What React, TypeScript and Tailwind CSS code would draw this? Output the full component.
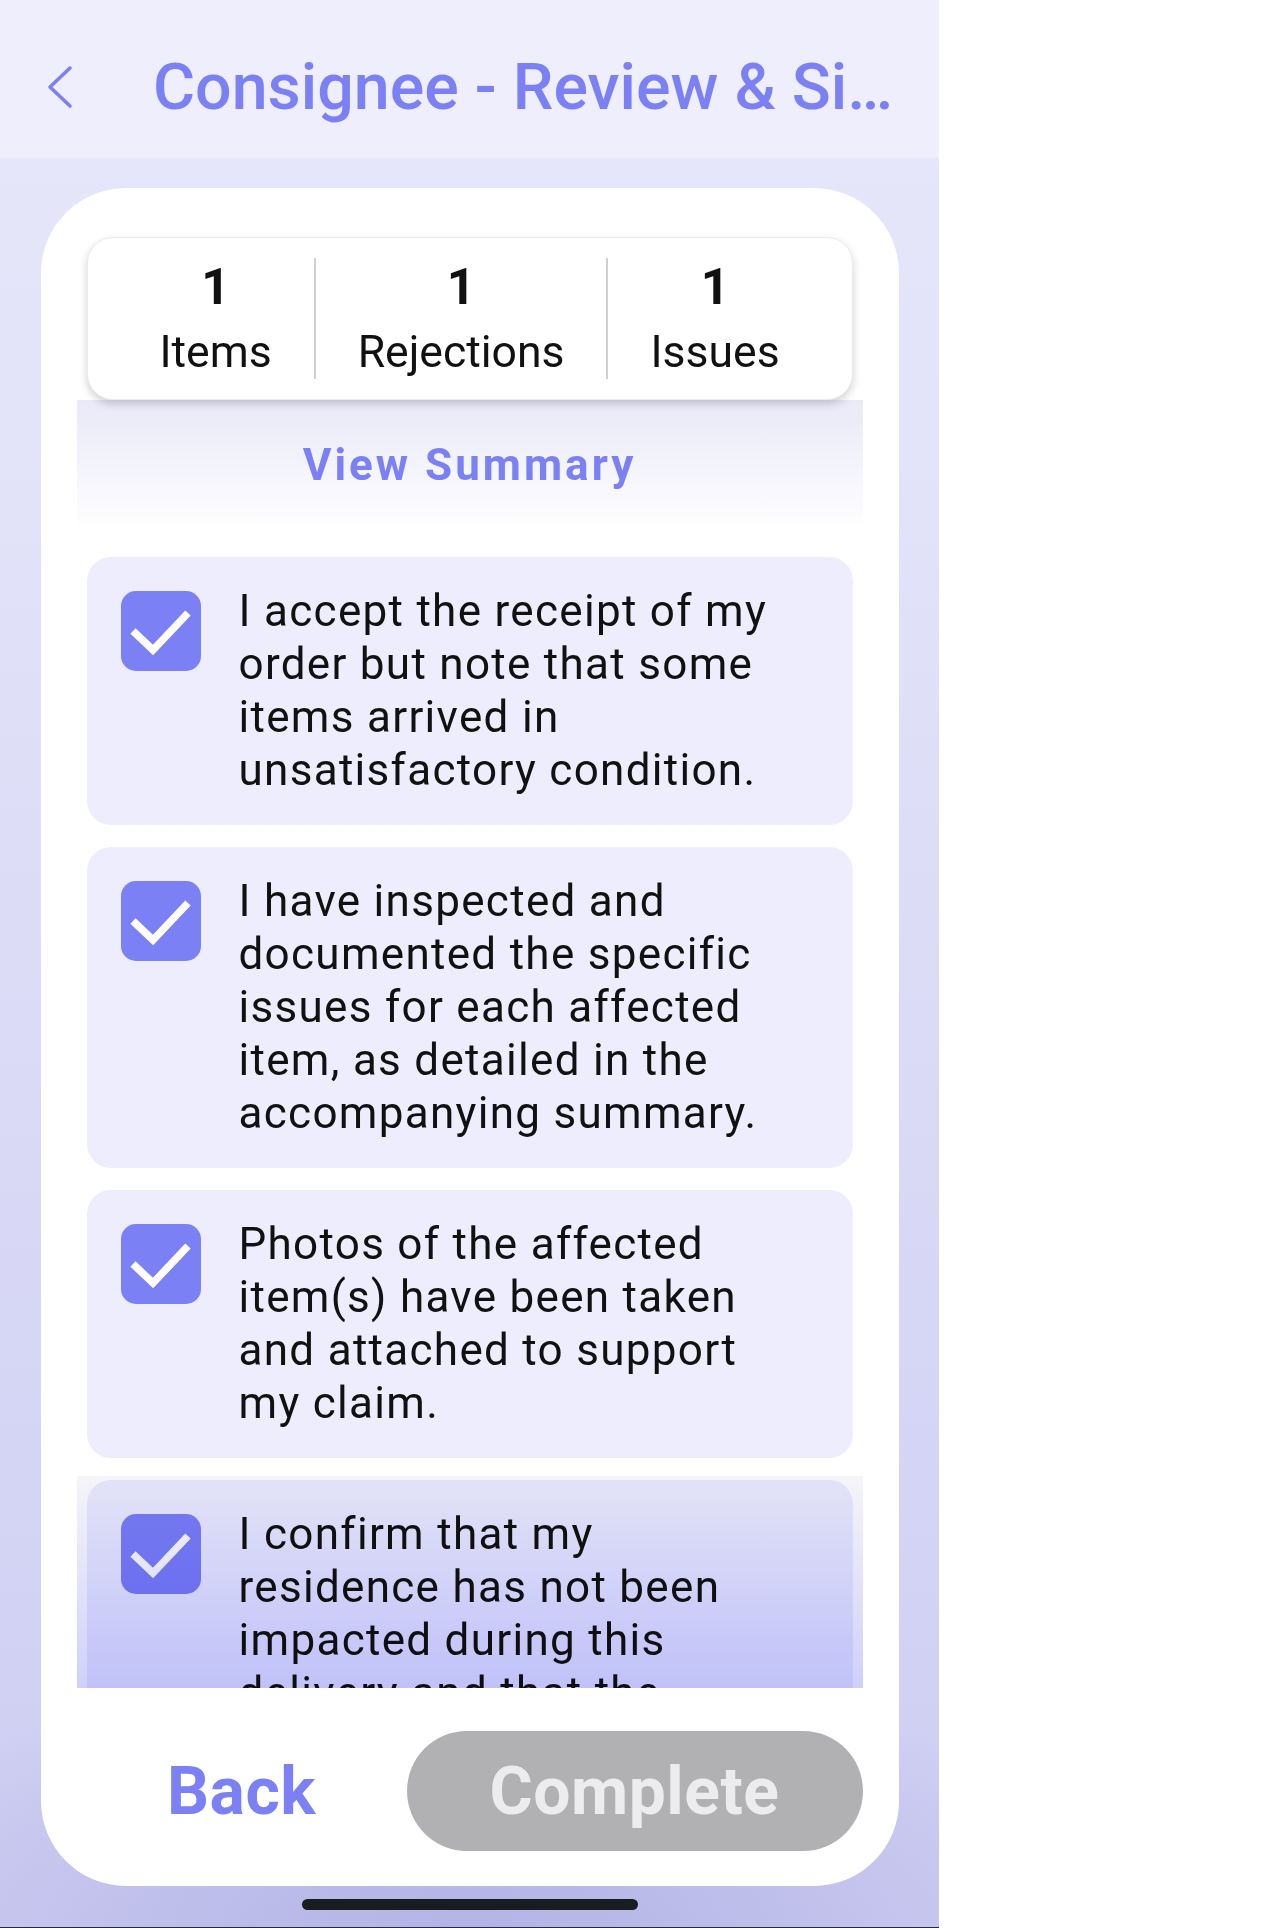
import React from 'react';

const statements = [
  'I accept the receipt of my order but note that some items arrived in unsatisfactory condition.',
  'I have inspected and documented the specific issues for each affected item, as detailed in the accompanying summary.',
  'Photos of the affected item(s) have been taken and attached to support my claim.',
  'I confirm that my residence has not been impacted during this delivery and that the property was left in the same condition as before.',
];

const stats = [
  { value: 1, label: 'Items' },
  { value: 1, label: 'Rejections' },
  { value: 1, label: 'Issues' },
];

const CheckBox = () => (
  <div className="mt-[6px] w-[80px] h-[80px] shrink-0 rounded-[15px] bg-[#7b80f5] flex items-center justify-center">
    <svg width="80" height="80" viewBox="0 0 80 80" fill="none">
      <polyline points="12,40 32,59 67,22" stroke="white" strokeWidth="7.5" strokeLinecap="butt" strokeLinejoin="miter" />
    </svg>
  </div>
);

export default function App() {
  return (
    <div className="flex min-h-screen bg-white font-['Roboto',sans-serif]">
      <div className="relative flex h-[1928px] w-[939px] shrink-0 flex-col bg-[radial-gradient(ellipse_70%_14%_at_50%_100%,#b3b3e6_0%,rgba(179,179,230,0)_100%),linear-gradient(to_bottom,#e8e8fb_0%,#e2e2f9_25%,#d9d9f6_60%,#cdcdf2_100%)]">
        {/* Top bar */}
        <header className="flex h-[158px] shrink-0 items-center bg-[#eeeefd] pt-[16px]">
          <button className="ml-[44px] flex h-[46px] w-[30px] items-center justify-center">
            <svg width="30" height="46" viewBox="0 0 30 46" fill="none">
              <path d="M26 4 L6 23 L26 42" stroke="#7b80f5" strokeWidth="3.5" strokeLinecap="round" strokeLinejoin="round" />
            </svg>
          </button>
          <h1 className="ml-[79px] w-[745px] truncate text-[64.5px] font-medium leading-[77px] text-[#7b80f5]">
            Consignee - Review &amp; Sign
          </h1>
        </header>

        {/* Main sheet */}
        <div className="mx-auto mt-[30px] flex h-[1698px] w-[858px] flex-col rounded-[85px] bg-white px-[36px] pb-[35px] pt-[49px]">
          {/* Stats */}
          <div className="relative z-10 mx-[10px] flex shrink-0 justify-center rounded-[26px] border border-[#ececf0] bg-white pb-[20px] pt-[20px] shadow-[0_4px_8px_rgba(0,0,0,0.18)]">
            {stats.map((s, i) => (
              <React.Fragment key={s.label}>
                {i > 0 && <div className="mx-[42px] w-[2px] self-stretch bg-[#cfcfd3]" />}
                <div className="flex flex-col items-center">
                  <span className="text-[50px] font-bold leading-[58px] text-[#111]">{s.value}</span>
                  <span className="mt-[10px] text-[44.5px] leading-[53px] text-[#111]">{s.label}</span>
                </div>
              </React.Fragment>
            ))}
          </div>

          {/* Scrollable list */}
          <div className="relative flex-1 overflow-hidden bg-[linear-gradient(to_bottom,#e9e9f8_0px,#f1f1fb_50px,#ffffff_130px)]">
            <div className="px-[10px] pt-[39px]">
              <p className="text-center text-[44px] font-bold leading-[52px] tracking-[3px] text-[#7b80f5]">View Summary</p>
              <div className="mt-[66px] flex flex-col gap-[22px]">
                {statements.map((t) => (
                  <div key={t} className="flex rounded-[24px] bg-[#ededfd] py-[28px] pl-[34px]">
                    <CheckBox />
                    <p className="ml-[38px] w-[548px] text-[44px] leading-[53px] tracking-[1.3px] text-[#111]">{t}</p>
                  </div>
                ))}
              </div>
            </div>
            <div className="pointer-events-none absolute bottom-0 left-0 right-0 h-[212px] bg-gradient-to-b from-[#f5f5f9] to-[#cfd0fa] mix-blend-multiply" />
          </div>

          {/* Actions */}
          <div className="mt-[43px] flex h-[120px] shrink-0 items-center">
            <button className="flex-1 text-center text-[66px] font-bold leading-[77px] tracking-[0.5px] text-[#7b80f5]">Back</button>
            <button className="h-[120px] w-[456px] rounded-full bg-[#b1b0b3] text-[66px] font-bold leading-[77px] tracking-[0.5px] text-[#ececee]">
              Complete
            </button>
          </div>
        </div>

        {/* Home indicator */}
        <div className="mx-auto mt-[13px] h-[11px] w-[336px] rounded-full bg-[#1b1b22]" />
        <div className="flex-1" />
        <div className="h-px bg-[#2a2a30]" />
      </div>
      <div className="flex-1 bg-white" />
    </div>
  );
}
